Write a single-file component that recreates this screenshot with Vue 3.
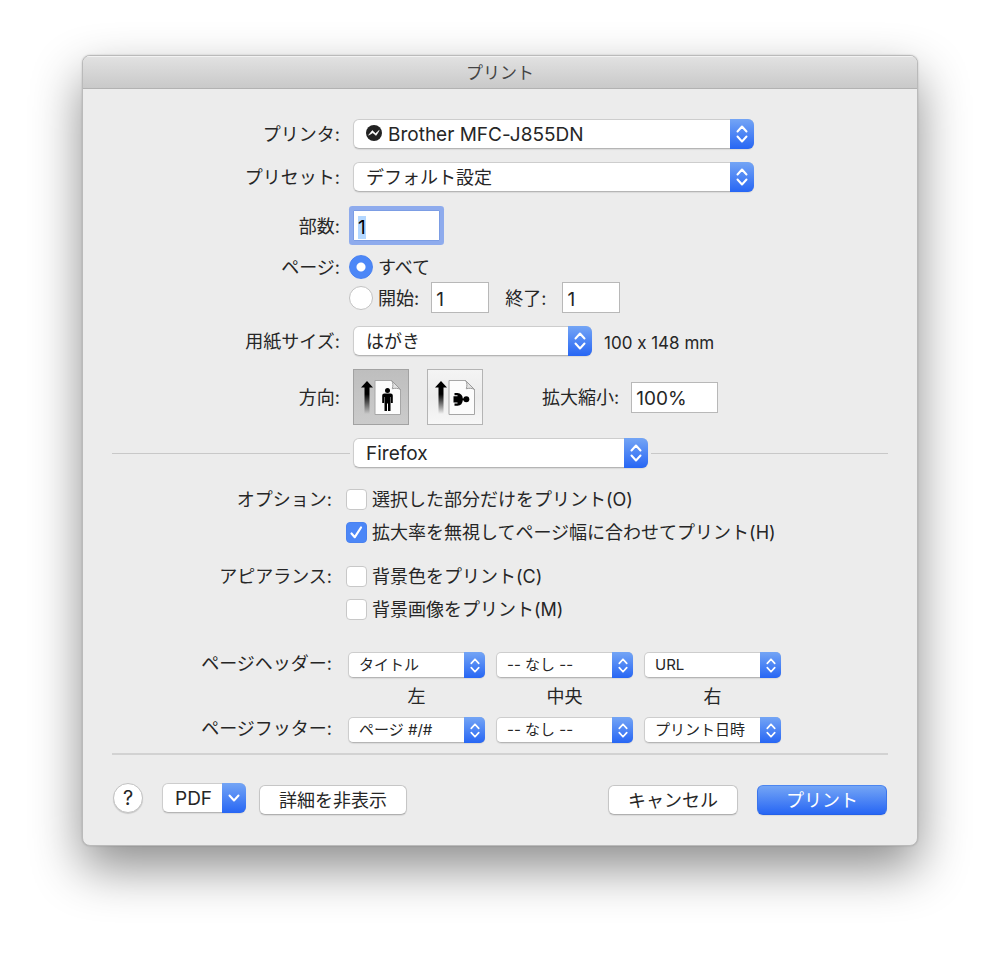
<script setup>
import { onMounted, ref } from 'vue'

const copies = ref('1')
const copiesInput = ref(null)
const pageRange = ref('all')
const fromPage = ref('1')
const toPage = ref('1')
const scale = ref('100%')
const orientation = ref('portrait')

const options = ref([
  {
    label: 'オプション:',
    items: [
      { id: 'selection', text: '選択した部分だけをプリント(O)', checked: false },
      { id: 'fit', text: '拡大率を無視してページ幅に合わせてプリント(H)', checked: true }
    ]
  },
  {
    label: 'アピアランス:',
    items: [
      { id: 'bgcolor', text: '背景色をプリント(C)', checked: false },
      { id: 'bgimage', text: '背景画像をプリント(M)', checked: false }
    ]
  }
])

const headers = ['タイトル', '-- なし --', 'URL']
const footers = ['ページ #/#', '-- なし --', 'プリント日時']
const positions = ['左', '中央', '右']

onMounted(() => {
  copiesInput.value.focus()
  copiesInput.value.select()
})
</script>

<template>
  <div class="desktop">
    <main class="dialog">
      <header class="titlebar">プリント</header>

      <form class="body" @submit.prevent>
        <section class="settings">
          <div class="row">
            <label class="label" for="printer">プリンタ:</label>
            <div class="field">
              <div class="popup wide latin with-icon">
                <select id="printer"><option>Brother MFC-J855DN</option></select>
                <svg class="printer-icon" viewBox="0 0 16 16">
                  <circle cx="8" cy="8" r="8" fill="#222" />
                  <path d="M2.6 10.2 6.3 5.6 9.5 8.6 13.2 5.4 10.1 10.4 6.8 7.8z" fill="#fff" stroke="#fff" stroke-width=".6" stroke-linejoin="round" />
                </svg>
                <span class="arrows"><svg viewBox="0 0 12 20"><path d="M1.5 7.5 6 2.5l4.5 5M1.5 12.5 6 17.5l4.5-5" /></svg></span>
              </div>
            </div>
          </div>

          <div class="row">
            <label class="label" for="preset">プリセット:</label>
            <div class="field">
              <div class="popup wide">
                <select id="preset"><option>デフォルト設定</option></select>
                <span class="arrows"><svg viewBox="0 0 12 20"><path d="M1.5 7.5 6 2.5l4.5 5M1.5 12.5 6 17.5l4.5-5" /></svg></span>
              </div>
            </div>
          </div>

          <div class="row copies-row">
            <label class="label" for="copies">部数:</label>
            <div class="field">
              <input id="copies" ref="copiesInput" v-model="copies" class="text copies" type="text">
            </div>
          </div>

          <div class="row top">
            <span class="label">ページ:</span>
            <div class="radios">
              <label class="radio-line">
                <input v-model="pageRange" type="radio" name="range" value="all">
                <span>すべて</span>
              </label>
              <div class="range">
                <label class="radio-line">
                  <input v-model="pageRange" type="radio" name="range" value="range">
                  <span>開始:</span>
                </label>
                <input v-model="fromPage" class="text page" type="text" aria-label="開始">
                <label class="to-label" for="to">終了:</label>
                <input id="to" v-model="toPage" class="text page" type="text">
              </div>
            </div>
          </div>

          <div class="row">
            <label class="label" for="paper">用紙サイズ:</label>
            <div class="field">
              <div class="popup paper">
                <select id="paper"><option>はがき</option></select>
                <span class="arrows"><svg viewBox="0 0 12 20"><path d="M1.5 7.5 6 2.5l4.5 5M1.5 12.5 6 17.5l4.5-5" /></svg></span>
              </div>
              <span class="dimensions">100 x 148 mm</span>
            </div>
          </div>

          <div class="row">
            <span class="label">方向:</span>
            <div class="field">
              <div class="orientations">
                <button
                  type="button"
                  class="orient"
                  :class="{ active: orientation === 'portrait' }"
                  aria-label="縦"
                  @click="orientation = 'portrait'"
                >
                  <svg viewBox="0 0 56 56">
                    <defs>
                      <linearGradient id="fade" x1="0" y1="0" x2="0" y2="1">
                        <stop offset="0.4" stop-color="#000" />
                        <stop offset="1" stop-color="#000" stop-opacity="0" />
                      </linearGradient>
                    </defs>
                    <path d="M14 12 20 18.5H16.5V45H11.5V18.5H8z" fill="url(#fade)" />
                    <path class="sheet" d="M22 11.5H38.5L47.5 20.5V45.5H22z" />
                    <path class="fold" d="M38.5 11.5C40.5 14 40 17 39.3 19.8 42 19 45 19 47.5 20.5z" />
                    <circle cx="34.5" cy="21.5" r="2.5" />
                    <path d="M31.3 24.5H37.7Q39.8 24.5 39.8 26.5V34H37.9V28H37.5V42H35V34.5H34V42H31.5V28H31.1V34H29.2V26.5Q29.2 24.5 31.3 24.5z" />
                  </svg>
                </button>
                <button
                  type="button"
                  class="orient"
                  :class="{ active: orientation === 'landscape' }"
                  aria-label="横"
                  @click="orientation = 'landscape'"
                >
                  <svg viewBox="0 0 56 56">
                    <path d="M14 12 20 18.5H16.5V45H11.5V18.5H8z" fill="url(#fade)" />
                    <path class="sheet" d="M22 11.5H38.5L47.5 20.5V45.5H22z" />
                    <path class="fold" d="M38.5 11.5C40.5 14 40 17 39.3 19.8 42 19 45 19 47.5 20.5z" />
                    <circle cx="39.3" cy="30.3" r="3" />
                    <path d="M27.5 24H30.5Q35.5 24.5 35.8 29.5H37V31.2H35.8Q35.5 36.2 30.5 36.7H27.5V34.4H30.5V33.4H26.5V27.2H30.5V26.3H27.5z" />
                  </svg>
                </button>
              </div>
              <label class="scale-label" for="scale">拡大縮小:</label>
              <input id="scale" v-model="scale" class="text scale" type="text">
            </div>
          </div>

          <div class="divider-row">
            <div class="popup app latin">
              <select aria-label="Firefox"><option>Firefox</option></select>
              <span class="arrows"><svg viewBox="0 0 12 20"><path d="M1.5 7.5 6 2.5l4.5 5M1.5 12.5 6 17.5l4.5-5" /></svg></span>
            </div>
          </div>
        </section>

        <section class="app-settings">
          <div v-for="group in options" :key="group.label" class="option-row">
            <span class="option-label">{{ group.label }}</span>
            <div class="checks">
              <label v-for="item in group.items" :key="item.id" class="check-line">
                <input v-model="item.checked" type="checkbox">
                <span>{{ item.text }}</span>
              </label>
            </div>
          </div>

          <div class="option-row marks">
            <span class="option-label">ページヘッダー:</span>
            <div class="mark-grid">
              <div v-for="(text, i) in headers" :key="i" class="popup small">
                <select :aria-label="'ページヘッダー ' + positions[i]"><option>{{ text }}</option></select>
                <span class="arrows"><svg viewBox="0 0 12 20"><path d="M1.5 7.5 6 2.5l4.5 5M1.5 12.5 6 17.5l4.5-5" /></svg></span>
              </div>
              <span v-for="pos in positions" :key="pos" class="position">{{ pos }}</span>
            </div>
          </div>

          <div class="option-row footers">
            <span class="option-label">ページフッター:</span>
            <div class="mark-grid">
              <div v-for="(text, i) in footers" :key="i" class="popup small">
                <select :aria-label="'ページフッター ' + positions[i]"><option>{{ text }}</option></select>
                <span class="arrows"><svg viewBox="0 0 12 20"><path d="M1.5 7.5 6 2.5l4.5 5M1.5 12.5 6 17.5l4.5-5" /></svg></span>
              </div>
            </div>
          </div>
        </section>

        <footer class="actions">
          <button type="button" class="help" aria-label="ヘルプ">?</button>
          <div class="popup pdf latin">
            <select aria-label="PDF"><option>PDF</option></select>
            <span class="arrows"><svg viewBox="0 0 12 20"><path d="M1.5 7.5 6 12.5l4.5-5" /></svg></span>
          </div>
          <button type="button" class="btn details">詳細を非表示</button>
          <button type="button" class="btn cancel">キャンセル</button>
          <button type="submit" class="btn primary">プリント</button>
        </footer>
      </form>
    </main>
  </div>
</template>

<style>
body {
  margin: 0;
  background: #fff;
}
</style>

<style scoped>
* {
  box-sizing: border-box;
}

.desktop {
  padding: 55px 82px 108px;
  font-family: Inter, "Noto Sans CJK JP", sans-serif;
  font-size: 18px;
  font-variant-ligatures: no-contextual;
  line-height: 24px;
  color: #262626;
}

.dialog {
  border: 1px solid #bababa;
  border-radius: 8px;
  background: #ececec;
  overflow: hidden;
  box-shadow: 0 22px 50px rgba(0, 0, 0, .45), 0 0 2px rgba(0, 0, 0, .2);
}

.titlebar {
  height: 33px;
  padding-top: 1px;
  border-bottom: 1px solid #b2b2b2;
  background: linear-gradient(#e2e2e2, #c9c9c9);
  box-shadow: inset 0 1px 0 #f2f2f2;
  text-align: center;
  font-size: 17px;
  line-height: 32px;
  color: #444;
}

.body {
  padding: 30px 29px;
}

.settings {
  display: flex;
  flex-direction: column;
  gap: 13px;
}

.row {
  display: grid;
  grid-template-columns: 228px minmax(0, 1fr);
  column-gap: 9px;
  align-items: center;
}

.row.top {
  align-items: start;
}

.copies-row {
  margin-top: 5px;
}

.label,
.option-label {
  padding-top: 2px;
  text-align: right;
  white-space: nowrap;
}

.field {
  display: flex;
  align-items: center;
  padding-left: 4px;
}

select,
input,
button {
  margin: 0;
  font: inherit;
  font-variant-ligatures: inherit;
  color: inherit;
}

.popup {
  position: relative;
  height: 30px;
}

.popup select {
  appearance: none;
  display: block;
  width: 100%;
  height: 100%;
  padding: 2px 30px 0 12px;
  border: 1px solid #cdcdcd;
  border-bottom-color: #b5b5b5;
  border-radius: 6px;
  outline: none;
  background: #fff;
  box-shadow: 0 1px 1px rgba(0, 0, 0, .08);
}

.popup.latin {
  font-size: 19px;
}

.popup.wide {
  width: 401px;
}

.popup.paper {
  width: 239px;
}

.popup.app {
  width: 295px;
}

.popup.with-icon select {
  padding-left: 34px;
}

.printer-icon {
  position: absolute;
  top: 6px;
  left: 13px;
  width: 16px;
  height: 16px;
  pointer-events: none;
}

.arrows {
  position: absolute;
  top: 0;
  right: 0;
  bottom: 0;
  width: 24px;
  display: grid;
  place-items: center;
  border-radius: 0 6px 6px 0;
  background: linear-gradient(#74a5f5, #2766f4);
  pointer-events: none;
}

.arrows svg {
  width: 12px;
  height: 20px;
  fill: none;
  stroke: #fff;
  stroke-width: 2;
  stroke-linecap: round;
  stroke-linejoin: round;
}

.text {
  height: 31px;
  padding: 3px 4px 0;
  border: 1px solid #b8b8b8;
  border-radius: 0;
  outline: none;
  background: #fff;
  font-size: 19px;
}

.copies {
  width: 87px;
  border-color: #7c9de4;
  border-radius: 1px;
  color: #000;
  box-shadow: 0 0 0 4px #8eabed;
}

.copies::selection {
  background: #b3d7ff;
  color: #000;
}

.radios {
  display: flex;
  flex-direction: column;
  gap: 2px;
}

.range {
  display: flex;
  align-items: center;
}

.radio-line {
  display: flex;
  align-items: center;
  gap: 5px;
}

.radio-line span,
.check-line span,
.to-label,
.scale-label {
  padding-top: 2px;
}

.radio-line input {
  appearance: none;
  width: 24px;
  height: 24px;
  border: 1px solid #c2c2c2;
  border-radius: 50%;
  background: #fff;
}

.radio-line input:checked {
  border-color: #4a82f0;
  background: radial-gradient(circle, #fff 4px, #4c87f7 5px);
}

.page {
  width: 58px;
}

.radio-line + .page {
  margin-left: 12px;
}

.to-label {
  margin: 0 16px;
}

.dimensions {
  padding-top: 3px;
  margin-left: 12px;
  font-size: 17px;
}

.orientations {
  display: flex;
  gap: 18px;
}

.orient {
  width: 56px;
  height: 56px;
  padding: 0;
  border: 1px solid #b4b4b4;
  background: linear-gradient(#f4f4f4, #ececec 50%, #f7f7f7);
}

.orient.active {
  border-color: #a2a2a2;
  background: linear-gradient(#bebebe, #cbcbcb);
}

.orient svg {
  display: block;
  width: 56px;
  height: 56px;
  margin: -1px;
}

.sheet {
  fill: #fcfcfc;
  stroke: #a6a6a6;
  stroke-width: 1;
}

.fold {
  fill: #e4e4e4;
  stroke: #999;
  stroke-width: 1;
}

.scale-label {
  margin: 0 12px 0 59px;
}

.scale {
  width: 87px;
}

.divider-row {
  display: grid;
  grid-template-columns: 238px auto minmax(0, 1fr);
  column-gap: 3px;
  align-items: center;
}

.divider-row::before,
.divider-row::after {
  content: "";
  height: 1px;
  background: #c8c8c8;
}

.app-settings {
  padding: 18px 0 10px;
  border-bottom: 2px solid #d2d2d2;
}

.option-row {
  display: grid;
  grid-template-columns: 220px minmax(0, 1fr);
  column-gap: 14px;
}

.option-row + .option-row {
  margin-top: 18px;
}

.checks {
  display: flex;
  flex-direction: column;
  gap: 7px;
}

.check-line {
  display: flex;
  align-items: center;
  gap: 5px;
}

.check-line input {
  appearance: none;
  flex: none;
  width: 21px;
  height: 21px;
  border: 1px solid #c8c8c8;
  border-radius: 4px;
  background: #fff;
}

.check-line input:checked {
  border-color: #4a82f0;
  background: #4c87f7 url("data:image/svg+xml,%3Csvg xmlns='http://www.w3.org/2000/svg' viewBox='0 0 19 19'%3E%3Cpath d='M4.5 10.5 7.8 14.2 14 4.5' fill='none' stroke='white' stroke-width='2.2' stroke-linecap='round' stroke-linejoin='round'/%3E%3C/svg%3E") center / 19px no-repeat;
}

.option-row.marks {
  margin-top: 30px;
}

.option-row.footers {
  margin-top: 8px;
}

.mark-grid {
  display: grid;
  grid-template-columns: repeat(3, 137px);
  column-gap: 11px;
  row-gap: 7px;
  padding-left: 2px;
}

.marks .option-label,
.footers .option-label {
  padding-top: 0;
}

.popup.small {
  height: 26px;
  font-size: 15px;
}

.popup.small select {
  padding: 0 24px 0 10px;
  border-radius: 5px;
}

.popup.small .arrows {
  width: 21px;
  border-radius: 0 5px 5px 0;
}

.popup.small svg {
  width: 10px;
  height: 17px;
}

.position {
  text-align: center;
}

.actions {
  display: flex;
  align-items: flex-start;
  padding: 28px 1px 0;
}

.help {
  width: 30px;
  height: 30px;
  padding: 0;
  border: 1px solid #c2c2c2;
  border-radius: 50%;
  background: #fff;
  box-shadow: 0 1px 1px rgba(0, 0, 0, .15);
  font-size: 20px;
}

.popup.pdf {
  width: 84px;
  margin: 0 13px 0 19px;
}

.btn {
  width: 130px;
  height: 30px;
  padding: 1px 0 0;
  margin-top: 2px;
  border: 1px solid #c6c6c6;
  border-bottom-color: #b0b0b0;
  border-radius: 6px;
  background: #fff;
  box-shadow: 0 1px 1px rgba(0, 0, 0, .08);
}

.details {
  width: 148px;
}

.cancel {
  margin-left: auto;
}

.primary {
  margin-left: 19px;
  border-color: #4c86f0 #3b75ec #2460e8;
  background: linear-gradient(#74a5f5, #2766f4);
  color: #fff;
}
</style>
